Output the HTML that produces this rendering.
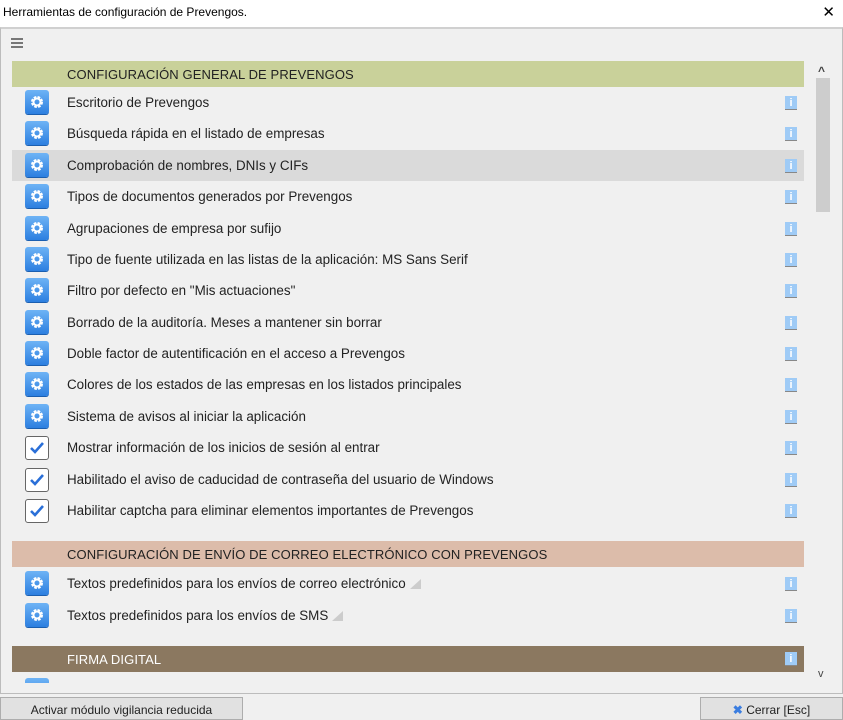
<!DOCTYPE html>
<html><head><meta charset="utf-8"><style>
*{margin:0;padding:0;box-sizing:border-box}
body{width:843px;height:720px;background:#f0f0f0;font-family:"Liberation Sans",sans-serif;position:relative;overflow:hidden;color:#222}
.title{position:absolute;left:0;top:0;width:843px;height:27px;background:#fff;font-size:12px;padding:5px 0 0 3px;color:#000}
.x{position:absolute;right:8px;top:3px;font-size:15px}
.panel{position:absolute;left:0;top:27px;width:843px;height:667px;border:1px solid #bcbcbc;border-top:2px solid #d0d0d0;background:#f0f0f0}
.menu{position:absolute;left:11px;top:38px;width:12px}
.menu i{display:block;height:2px;background:#777;margin-bottom:2px}
.hdr{position:absolute;left:12px;width:792px;height:26px;font-size:13px;padding:6px 0 0 55px;letter-spacing:.1px}
.row{position:absolute;left:12px;width:792px;height:31px;font-size:13.4px;padding:8px 0 0 55px}
.gear{position:absolute;left:13px;top:3px;width:24px;height:24px;border-radius:3px;background:linear-gradient(#6eb3f5,#2c7fe0);box-shadow:0 1px 0 #1b5fb0}
.gear svg{position:absolute;left:4px;top:4px}
.chk{position:absolute;left:13px;top:4px;width:24px;height:24px;border:1.5px solid #666;border-radius:3px;background:#fff}
.chk svg{position:absolute;left:3px;top:4px}
.info{position:absolute;left:773px;top:9px;width:12px;height:14px;background:#9fcbf6;border-bottom:1px solid #888;color:#fff;font-size:11px;font-weight:bold;text-align:center;line-height:14px}
.tri{display:inline-block;width:0;height:0;border-left:11px solid transparent;border-bottom:10px solid #ccc;margin-left:4px;vertical-align:-1px;position:relative}
.scroll{position:absolute;left:816px;top:78px;width:14px;height:134px;background:#cdcdcd}
.btn{position:absolute;top:697px;height:23px;background:#e1e1e1;border:1px solid #adadad;font-size:12px;text-align:center;padding-top:5px}
</style></head><body>
<div class="title">Herramientas de configuración de Prevengos.<span class="x">✕</span></div>
<div class="panel"></div>
<div class="menu"><i></i><i></i><i></i></div>
<div style="position:absolute;left:818px;top:64px;font-size:12px;color:#444;font-weight:bold">&#94;</div>
<div class="scroll"></div>
<div style="position:absolute;left:818px;top:668px;font-size:11px;color:#444">v</div>

<div class="hdr" style="top:61px;background:#c9d19a">CONFIGURACIÓN GENERAL DE PREVENGOS</div>

<div style="position:absolute;left:0;top:0">
<div class="row" style="top:87px"><span class="gear"><svg width="16" height="16" viewBox="0 0 16 16"><circle cx="8" cy="8" r="4.5" fill="none" stroke="#fff" stroke-width="3" stroke-dasharray="2.4 1.2"/><circle cx="8" cy="8" r="3.5" fill="none" stroke="#fff" stroke-width="2"/></svg></span>Escritorio de Prevengos<span class="info">i</span></div>
<div class="row" style="top:118px"><span class="gear"><svg width="16" height="16" viewBox="0 0 16 16"><circle cx="8" cy="8" r="4.5" fill="none" stroke="#fff" stroke-width="3" stroke-dasharray="2.4 1.2"/><circle cx="8" cy="8" r="3.5" fill="none" stroke="#fff" stroke-width="2"/></svg></span>Búsqueda rápida en el listado de empresas<span class="info">i</span></div>
<div class="row" style="top:150px;background:#dadada"><span class="gear"><svg width="16" height="16" viewBox="0 0 16 16"><circle cx="8" cy="8" r="4.5" fill="none" stroke="#fff" stroke-width="3" stroke-dasharray="2.4 1.2"/><circle cx="8" cy="8" r="3.5" fill="none" stroke="#fff" stroke-width="2"/></svg></span>Comprobación de nombres, DNIs y CIFs<span class="info">i</span></div>
<div class="row" style="top:181px"><span class="gear"><svg width="16" height="16" viewBox="0 0 16 16"><circle cx="8" cy="8" r="4.5" fill="none" stroke="#fff" stroke-width="3" stroke-dasharray="2.4 1.2"/><circle cx="8" cy="8" r="3.5" fill="none" stroke="#fff" stroke-width="2"/></svg></span>Tipos de documentos generados por Prevengos<span class="info">i</span></div>
<div class="row" style="top:213px"><span class="gear"><svg width="16" height="16" viewBox="0 0 16 16"><circle cx="8" cy="8" r="4.5" fill="none" stroke="#fff" stroke-width="3" stroke-dasharray="2.4 1.2"/><circle cx="8" cy="8" r="3.5" fill="none" stroke="#fff" stroke-width="2"/></svg></span>Agrupaciones de empresa por sufijo<span class="info">i</span></div>
<div class="row" style="top:244px"><span class="gear"><svg width="16" height="16" viewBox="0 0 16 16"><circle cx="8" cy="8" r="4.5" fill="none" stroke="#fff" stroke-width="3" stroke-dasharray="2.4 1.2"/><circle cx="8" cy="8" r="3.5" fill="none" stroke="#fff" stroke-width="2"/></svg></span>Tipo de fuente utilizada en las listas de la aplicación: MS Sans Serif<span class="info">i</span></div>
<div class="row" style="top:275px"><span class="gear"><svg width="16" height="16" viewBox="0 0 16 16"><circle cx="8" cy="8" r="4.5" fill="none" stroke="#fff" stroke-width="3" stroke-dasharray="2.4 1.2"/><circle cx="8" cy="8" r="3.5" fill="none" stroke="#fff" stroke-width="2"/></svg></span>Filtro por defecto en "Mis actuaciones"<span class="info">i</span></div>
<div class="row" style="top:307px"><span class="gear"><svg width="16" height="16" viewBox="0 0 16 16"><circle cx="8" cy="8" r="4.5" fill="none" stroke="#fff" stroke-width="3" stroke-dasharray="2.4 1.2"/><circle cx="8" cy="8" r="3.5" fill="none" stroke="#fff" stroke-width="2"/></svg></span>Borrado de la auditoría. Meses a mantener sin borrar<span class="info">i</span></div>
<div class="row" style="top:338px"><span class="gear"><svg width="16" height="16" viewBox="0 0 16 16"><circle cx="8" cy="8" r="4.5" fill="none" stroke="#fff" stroke-width="3" stroke-dasharray="2.4 1.2"/><circle cx="8" cy="8" r="3.5" fill="none" stroke="#fff" stroke-width="2"/></svg></span>Doble factor de autentificación en el acceso a Prevengos<span class="info">i</span></div>
<div class="row" style="top:369px"><span class="gear"><svg width="16" height="16" viewBox="0 0 16 16"><circle cx="8" cy="8" r="4.5" fill="none" stroke="#fff" stroke-width="3" stroke-dasharray="2.4 1.2"/><circle cx="8" cy="8" r="3.5" fill="none" stroke="#fff" stroke-width="2"/></svg></span>Colores de los estados de las empresas en los listados principales<span class="info">i</span></div>
<div class="row" style="top:401px"><span class="gear"><svg width="16" height="16" viewBox="0 0 16 16"><circle cx="8" cy="8" r="4.5" fill="none" stroke="#fff" stroke-width="3" stroke-dasharray="2.4 1.2"/><circle cx="8" cy="8" r="3.5" fill="none" stroke="#fff" stroke-width="2"/></svg></span>Sistema de avisos al iniciar la aplicación<span class="info">i</span></div>
<div class="row" style="top:432px"><span class="chk"><svg width="16" height="14" viewBox="0 0 16 14"><path d="M2 7 L6 11 L14 2" fill="none" stroke="#2a6fd8" stroke-width="2.6"/></svg></span>Mostrar información de los inicios de sesión al entrar<span class="info">i</span></div>
<div class="row" style="top:464px"><span class="chk"><svg width="16" height="14" viewBox="0 0 16 14"><path d="M2 7 L6 11 L14 2" fill="none" stroke="#2a6fd8" stroke-width="2.6"/></svg></span>Habilitado el aviso de caducidad de contraseña del usuario de Windows<span class="info">i</span></div>
<div class="row" style="top:495px"><span class="chk"><svg width="16" height="14" viewBox="0 0 16 14"><path d="M2 7 L6 11 L14 2" fill="none" stroke="#2a6fd8" stroke-width="2.6"/></svg></span>Habilitar captcha para eliminar elementos importantes de Prevengos<span class="info">i</span></div>
</div>

<div class="hdr" style="top:541px;background:#dcbcaa">CONFIGURACIÓN DE ENVÍO DE CORREO ELECTRÓNICO CON PREVENGOS</div>
<div class="row" style="top:568px"><span class="gear"><svg width="16" height="16" viewBox="0 0 16 16"><circle cx="8" cy="8" r="4.5" fill="none" stroke="#fff" stroke-width="3" stroke-dasharray="2.4 1.2"/><circle cx="8" cy="8" r="3.5" fill="none" stroke="#fff" stroke-width="2"/></svg></span>Textos predefinidos para los envíos de correo electrónico<span class="tri"></span><span class="info">i</span></div>
<div class="row" style="top:600px"><span class="gear"><svg width="16" height="16" viewBox="0 0 16 16"><circle cx="8" cy="8" r="4.5" fill="none" stroke="#fff" stroke-width="3" stroke-dasharray="2.4 1.2"/><circle cx="8" cy="8" r="3.5" fill="none" stroke="#fff" stroke-width="2"/></svg></span>Textos predefinidos para los envíos de SMS<span class="tri"></span><span class="info">i</span></div>

<div class="hdr" style="top:646px;background:#8b7860;color:#fff">FIRMA DIGITAL<span class="info" style="top:6px">i</span></div>
<div style="position:absolute;left:12px;top:672px;width:792px;height:11px;overflow:hidden">
<div class="row" style="top:3px;left:0"><span class="gear"></span><span style="color:#222">Gestión de la firma electrónica de la documentación aplicada</span><span class="info">i</span></div>
</div>

<div class="btn" style="left:0;width:243px">Activar módulo vigilancia reducida</div>
<div class="btn" style="left:700px;width:143px"><span style="color:#3a7de0;font-weight:bold">✖</span> Cerrar [Esc]</div>
</body></html>
